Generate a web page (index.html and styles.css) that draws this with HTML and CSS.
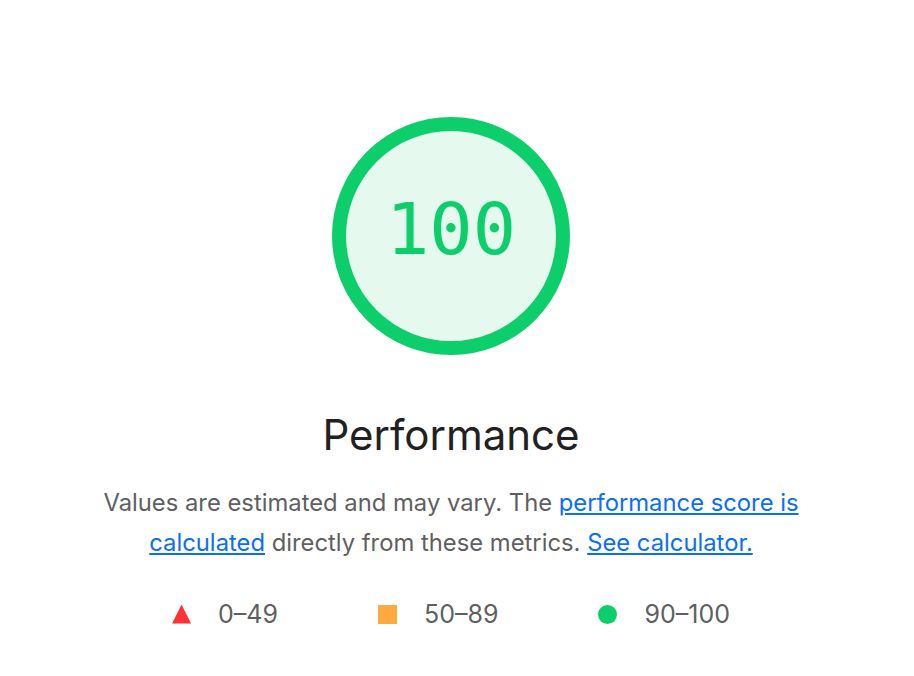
FILE: index.html
```html
<!DOCTYPE html>
<html lang="en">
<head>
  <meta charset="UTF-8" />
  <title>Performance</title>
  <link rel="stylesheet" href="styles.css">
</head>
<body>
  <div class="score-wrap">
    <div class="gauge">
      <span class="gauge-value">100</span>
    </div>
    <h2 class="gauge-label">Performance</h2>
    <p class="desc">
      Values are estimated and may vary. The <a href="#">performance score is calculated</a>
      directly from these metrics. <a href="#">See calculator.</a>
    </p>
    <div class="legend">
      <span class="legend-item"><span class="mark mark-fail"></span>0–49</span>
      <span class="legend-item"><span class="mark mark-average"></span>50–89</span>
      <span class="legend-item"><span class="mark mark-pass"></span>90–100</span>
    </div>
  </div>
</body>
</html>
```

FILE: styles.css
```css
body {
  margin: 0;
  background: #fff;
  font-family: Inter, "Noto Sans", Arial, sans-serif;
}
.score-wrap {
  width: 902px;
  padding-top: 117px;
  display: flex;
  flex-direction: column;
  align-items: center;
}
.gauge {
  width: 238px;
  height: 238px;
  box-sizing: border-box;
  border: 14px solid #0cce6b;
  border-radius: 50%;
  background: #e5f9ef;
  display: flex;
  align-items: center;
  justify-content: center;
}
.gauge-value {
  font-family: "DejaVu Sans Mono", monospace;
  font-size: 72px;
  color: #0cce6b;
  margin-bottom: 14px;
}
.gauge-label {
  font-weight: normal;
  font-size: 42px;
  color: #212121;
  margin: 52px 0 0;
  line-height: 56px;
}
.desc {
  max-width: 700px;
  margin: 20px 0 0;
  text-align: center;
  font-size: 23.8px;
  line-height: 40px;
  color: #5f5f5f;
}
.desc a {
  color: #0b6ef7;
}
.legend {
  display: flex;
  gap: 100px;
  margin-top: 36px;
  font-size: 25px;
  color: #5f5f5f;
}
.legend-item {
  display: flex;
  align-items: center;
  gap: 27px;
}
.mark {
  width: 19px;
  height: 19px;
  display: inline-block;
}
.mark-fail {
  background: #ff3333;
  clip-path: polygon(50% 0, 100% 100%, 0 100%);
}
.mark-average {
  background: #ffa93f;
}
.mark-pass {
  background: #0cce6b;
  border-radius: 50%;
}
```
